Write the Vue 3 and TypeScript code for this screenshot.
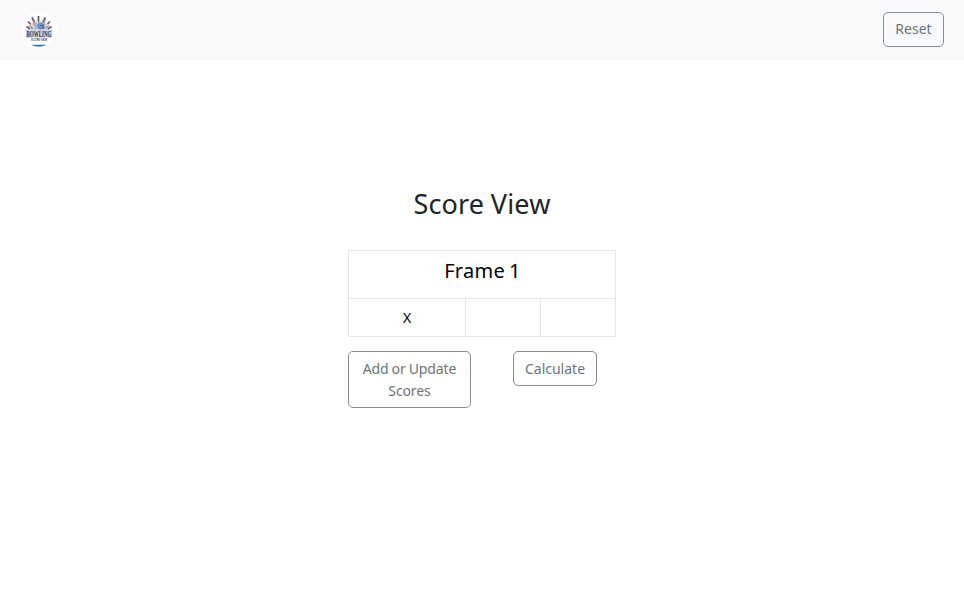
<script setup lang="ts">
const frame = 1
const rolls: string[] = ['X', '', '']
</script>

<template>
  <div class="page">
    <header class="navbar">
      <svg class="logo" viewBox="0 0 36 36" role="img" aria-label="Bowling logo">
        <circle cx="18" cy="18" r="18" fill="#fff" />
        <path d="M10 32.7H26Q18 36.8 10 32.7Z" fill="#2f7ab3" />
        <path d="M17.5 4V10M11 5.5L13.5 10M24.5 5.5L22 10M7 9.5L10.5 13M29 9.5L25.5 13M5.5 14.5L9 17M30.5 14.5L27 17" fill="none" stroke="#5c5b80" stroke-width="1.7" />
        <path d="M9.5 17.5Q10 9.5 18 9.5T27 17.5Z" fill="#a4b4d6" />
        <path d="M10 12L14 16M15 8L17 12M26.5 12L23 15M21 8L20 11" stroke="#eddfae" stroke-width="1.6" />
        <circle cx="20" cy="14" r="3.6" fill="#6f8fc4" />
        <path d="M20 13.5H22.5M21.5 15.5H23" stroke="#33436f" stroke-width="1" />
        <path d="M8 13.5L11 16M28 13.5L25.5 16M12 9L13 12M24 8.5L23 11" stroke="#cf7f72" stroke-width="1.4" />
        <path d="M4.5 17L8 18H28L31.5 17L31 25.8H5Z" fill="#d0d0df" />
        <text x="5.5" y="25.2" textLength="25" lengthAdjust="spacingAndGlyphs" class="logo-name">BOWLING</text>
        <text x="10" y="29.3" textLength="16" lengthAdjust="spacingAndGlyphs" class="logo-sub">SCORE VIEW</text>
      </svg>
      <button class="btn reset" type="button">Reset</button>
    </header>
    <main class="score">
      <h1>Score View</h1>
      <section class="frame">
        <h2>Frame {{ frame }}</h2>
        <div class="rolls">
          <div v-for="(roll, i) in rolls" :key="i" class="roll">{{ roll }}</div>
        </div>
      </section>
      <div class="actions">
        <button class="btn update" type="button">Add or Update Scores</button>
        <button class="btn calculate" type="button">Calculate</button>
      </div>
    </main>
  </div>
</template>

<style>
body { margin: 0; background: #fff; }
</style>

<style scoped>
.page {
  box-sizing: border-box;
  min-height: 596px;
  font-family: "Noto Sans", sans-serif;
  font-size: 14px;
  color: #212529;
}
.navbar {
  box-sizing: border-box;
  height: 60px;
  padding: 0 20px 2px 21px;
  display: flex;
  align-items: center;
  justify-content: space-between;
  background: #f8f9fb;
}
.logo { width: 36px; height: 36px; margin-top: 2px; overflow: visible; }
.logo-name { font: bold 9px "Liberation Serif", serif; fill: #34345e; }
.logo-sub { font: bold 3px "Liberation Sans", sans-serif; fill: #3c517c; }
.btn {
  box-sizing: border-box;
  height: 35px;
  padding: 5px 10px;
  border: 1px solid #868c94;
  border-radius: 5px;
  background: transparent;
  color: #6c757d;
  font: 14px/22px "Noto Sans", sans-serif;
  text-align: center;
}
.reset { width: 61px; }
.score { width: 268px; margin: 0 auto; padding-top: 125px; }
h1 {
  margin: 0 0 27px;
  font-size: 27px;
  line-height: 38px;
  font-weight: 400;
  letter-spacing: 0.15px;
  word-spacing: -0.5px;
  text-align: center;
  white-space: nowrap;
}
.frame { border: 1px solid #e5e6e9; box-sizing: border-box; height: 87px; color: #000; }
h2 {
  margin: 0;
  box-sizing: border-box;
  height: 48px;
  padding-top: 5px;
  border-bottom: 1px solid #e5e6e9;
  font-size: 20px;
  line-height: 30px;
  font-weight: 400;
  letter-spacing: 0.3px;
  word-spacing: -1.5px;
  text-indent: 1px;
  text-align: center;
}
.rolls { display: grid; grid-template-columns: 117px 75px 74px; height: 37px; }
.roll { box-sizing: border-box; line-height: 38px; text-align: center; border-right: 1px solid #e5e6e9; }
.roll:last-child { border-right: 0; }
.actions { display: flex; align-items: flex-start; gap: 42px; margin-top: 14px; }
.update { width: 123px; height: 57px; letter-spacing: -0.1px; word-spacing: -0.5px; }
.calculate { width: 84px; }
</style>
